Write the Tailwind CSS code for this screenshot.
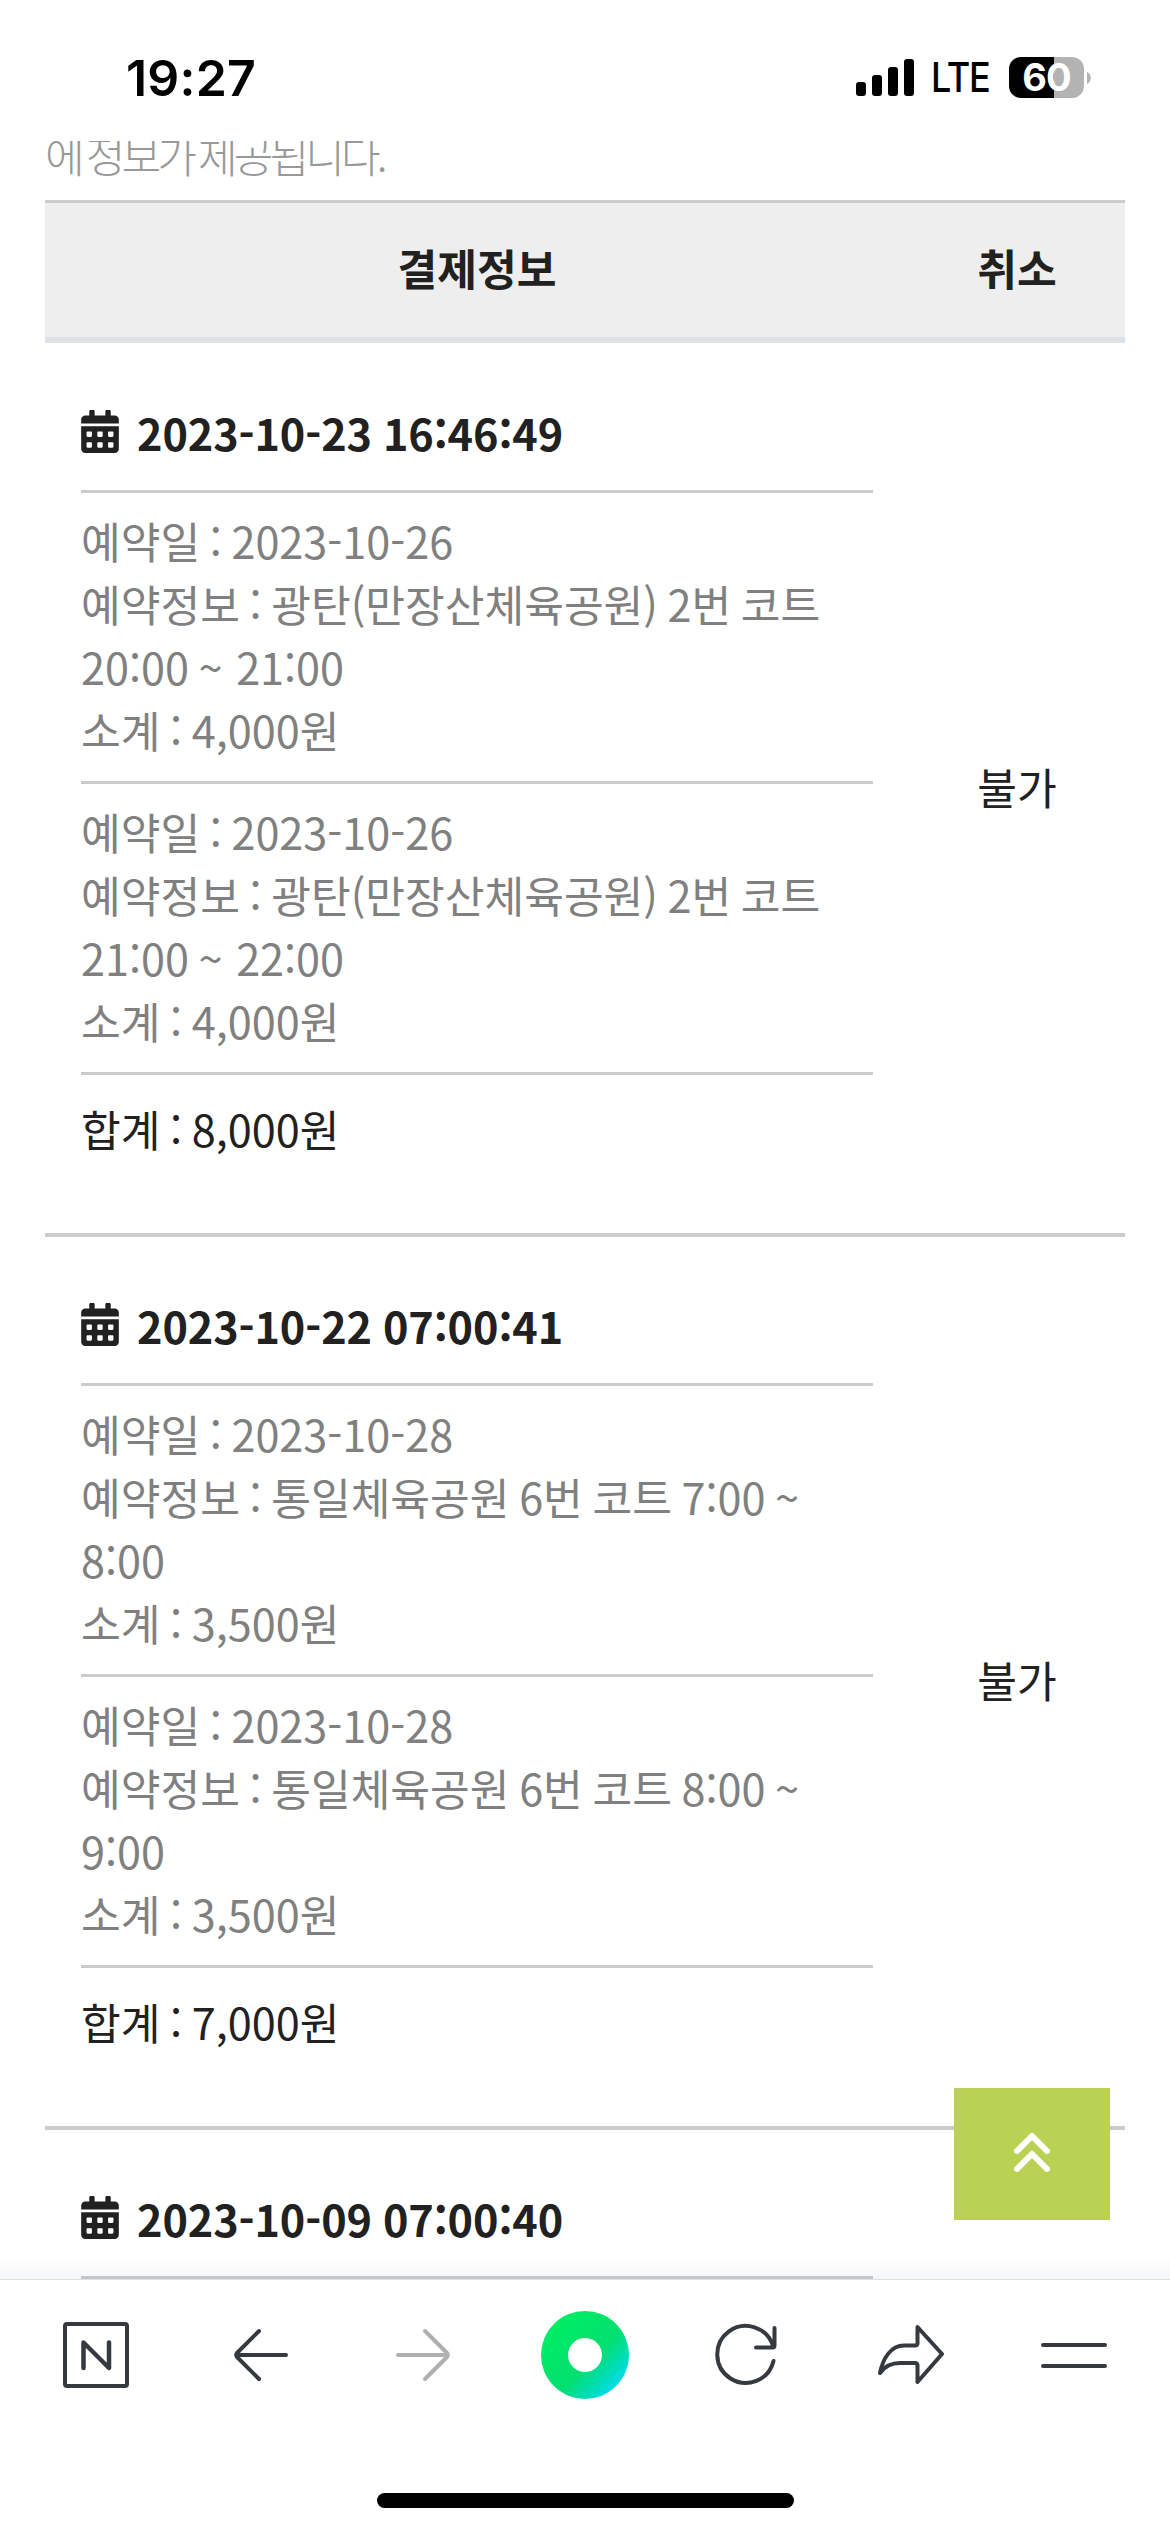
<!DOCTYPE html>
<html lang="ko">
<head>
  <meta charset="UTF-8">
  <meta name="viewport" content="width=device-width, initial-scale=1.0">
  <title>예약 내역</title>
  <script src="https://cdn.jsdelivr.net/npm/@tailwindcss/browser@4"></script>
</head>
<body class="bg-white text-[#212121] font-['Noto_Sans_CJK_KR',sans-serif] text-[43.2px] leading-[63px] [word-spacing:-2.5px]">
  <div class="relative flex flex-col w-[1170px] h-[2532px] overflow-hidden">

    <!-- status bar -->
    <header class="h-[141px] shrink-0 flex justify-between items-start pt-[57px] pl-[126px] pr-[79px] font-['Inter',sans-serif] text-black bg-white">
      <span class="text-[50px] leading-[42px] font-semibold tracking-[0.2px]">19:27</span>
      <div class="flex items-center h-[41px]">
        <svg class="w-[58px] h-[41px]" viewBox="0 0 58 41">
          <rect x="0" y="25" width="10" height="14" rx="3"/>
          <rect x="16" y="18" width="10" height="21" rx="3"/>
          <rect x="32" y="10" width="10" height="29" rx="3"/>
          <rect x="48" y="2" width="10" height="37" rx="3"/>
        </svg>
        <span class="ml-[17px] w-[63px] text-[41px] leading-[41px] tracking-[-1.5px] font-medium origin-left scale-x-[0.88]">LTE</span>
        <div class="ml-[15px] w-[75px] h-[41px] rounded-[12px] bg-[linear-gradient(to_right,#000_60%,#b3b3b3_60%)] text-white text-[38px] leading-[41px] font-bold text-center tracking-[-1px]">60</div>
        <svg class="ml-[3px] w-[4px] h-[12px]" viewBox="0 0 4 12"><path d="M0 0c5 2 5 10 0 12z" fill="#b3b3b3"/></svg>
      </div>
    </header>

    <main class="flex-1 min-h-0 overflow-hidden px-[45px]">
      <p class="-mt-[18px] mb-[14px] text-[#999] font-light tracking-[-4px] [word-spacing:-3px]">에 정보가 제공됩니다.</p>

      <div class="flex h-[143px] border-t-3 border-t-[#ccc] border-b-6 border-b-[#dee2e6] bg-[#eee] items-center text-center font-bold pb-[5px]">
        <div class="w-[864px]">결제정보</div>
        <div class="flex-1">취소</div>
      </div>
      <div id="list" class="mt-px"></div>
    </main>

    <!-- browser toolbar -->
    <nav class="relative z-10 h-[253px] shrink-0 bg-white border-t border-[#e0e1e3] flex flex-col justify-between pb-6">
      <div class="absolute -top-[21px] left-0 w-full h-5 bg-linear-to-b from-transparent to-[#3c5078]/5"></div>
      <div class="flex justify-between items-center px-[63px] h-[150px]">
        <svg class="w-[66px] h-[66px]" viewBox="0 0 66 66" fill="none" stroke="#36393f" stroke-width="4" stroke-linecap="round" stroke-linejoin="round">
          <rect x="2" y="2" width="62" height="62" rx="2"/>
          <path d="M20.500 46V20.500L46 46V20.500" stroke-width="4.500"/>
        </svg>
        <svg class="w-[66px] h-[66px]" viewBox="0 0 66 66" fill="none" stroke="#36393f" stroke-width="4" stroke-linecap="round" stroke-linejoin="round">
          <path d="M60 33H11M33 9L11 31q-1.500 2 0 4L33 57"/>
        </svg>
        <svg class="w-[66px] h-[66px]" viewBox="0 0 66 66" fill="none" stroke="#b0b0b0" stroke-width="4" stroke-linecap="round" stroke-linejoin="round">
          <path d="M9 33H58M36 9L58 31q1.500 2 0 4L36 57"/>
        </svg>
        <svg class="w-[88px] h-[88px] -mx-[11px]" viewBox="0 0 88 88">
          <defs>
            <linearGradient id="dot" x1="0.150" y1="0.150" x2="0.850" y2="0.850">
              <stop offset="0" stop-color="#00ed64"/>
              <stop offset="0.600" stop-color="#03df70"/>
              <stop offset="1" stop-color="#00dbe8"/>
            </linearGradient>
          </defs>
          <circle cx="44" cy="44" r="44" fill="url(#dot)"/>
          <circle cx="44" cy="44" r="17" fill="#fff"/>
        </svg>
        <svg class="w-[66px] h-[66px]" viewBox="0 0 66 66" fill="none" stroke="#36393f" stroke-width="4" stroke-linecap="round" stroke-linejoin="round">
          <path d="M58.500 39A28.500 28.500 0 1 1 58 24M59.500 6V23.500q0 2 -2 2H41"/>
        </svg>
        <svg class="w-[66px] h-[66px]" viewBox="0 0 66 66" fill="none" stroke="#36393f" stroke-width="4" stroke-linecap="round" stroke-linejoin="round">
          <path d="M2 51C5 36 13 23.500 26 23.500H37q2.500 0 2.500 -2.500V5L64 32L39.500 60V43.500q0 -2.500 -2.500 -2.500H22C13 41 7 44 2 51z"/>
        </svg>
        <svg class="w-[66px] h-[66px]" viewBox="0 0 66 66" fill="none" stroke="#36393f" stroke-width="4" stroke-linecap="round">
          <path d="M2 23H64M2 44H64"/>
        </svg>
      </div>
      <div class="w-[417px] h-[15px] rounded-full bg-black mx-auto"></div>
    </nav>

    <!-- back to top -->
    <button class="absolute right-[60px] bottom-[312px] w-[156px] h-[132px] pb-[3px] bg-[#bad154] flex justify-center items-center">
      <svg class="w-9 h-[39px]" viewBox="0 0 36 39" fill="none" stroke="#fff" stroke-width="6" stroke-linecap="round" stroke-linejoin="round">
        <path d="M3 18L18 3L33 18M3 36L18 21L33 36"/>
      </svg>
    </button>
  </div>

  <script>
    const payments = [
      { date: '2023-10-23 16:46:49', total: '8,000', status: '불가', items: [
        { day: '2023-10-26', info: '광탄(만장산체육공원) 2번 코트<br>20:00 ~ <span class="ml-[4px]">21:00</span>', price: '4,000' },
        { day: '2023-10-26', info: '광탄(만장산체육공원) 2번 코트<br>21:00 ~ <span class="ml-[4px]">22:00</span>', price: '4,000' }
      ] },
      { date: '2023-10-22 07:00:41', total: '7,000', status: '불가', items: [
        { day: '2023-10-28', info: '통일체육공원 6번 코트 7:00 ~<br>8:00', price: '3,500' },
        { day: '2023-10-28', info: '통일체육공원 6번 코트 8:00 ~<br>9:00', price: '3,500' }
      ] },
      { date: '2023-10-09 07:00:40', total: '', status: '', items: [] }
    ];

    const calendar = `
      <svg class="w-[38px] h-[43px] -mt-[3px]" viewBox="0 0 448 512" fill="#212121">
        <path d="M0 464c0 26.500 21.500 48 48 48h352c26.500 0 48-21.500 48-48V192H0v272zm320-196c0-6.600 5.400-12 12-12h40c6.600 0 12 5.400 12 12v40c0 6.600-5.400 12-12 12h-40c-6.600 0-12-5.400-12-12v-40zm0 128c0-6.600 5.400-12 12-12h40c6.600 0 12 5.400 12 12v40c0 6.600-5.400 12-12 12h-40c-6.600 0-12-5.400-12-12v-40zM192 268c0-6.600 5.400-12 12-12h40c6.600 0 12 5.400 12 12v40c0 6.600-5.400 12-12 12h-40c-6.600 0-12-5.400-12-12v-40zm0 128c0-6.600 5.400-12 12-12h40c6.600 0 12 5.400 12 12v40c0 6.600-5.400 12-12 12h-40c-6.600 0-12-5.400-12-12v-40zM64 268c0-6.600 5.400-12 12-12h40c6.600 0 12 5.400 12 12v40c0 6.600-5.400 12-12 12H76c-6.600 0-12-5.400-12-12v-40zm0 128c0-6.600 5.400-12 12-12h40c6.600 0 12 5.400 12 12v40c0 6.600-5.400 12-12 12H76c-6.600 0-12-5.400-12-12v-40zM400 64h-48V16c0-8.800-7.200-16-16-16h-32c-8.800 0-16 7.200-16 16v48H160V16c0-8.800-7.200-16-16-16h-32c-8.800 0-16 7.200-16 16v48H48C21.500 64 0 85.500 0 112v48h448v-48c0-26.500-21.500-48-48-48z"/>
      </svg>`;

    document.getElementById('list').innerHTML = payments.map(p => `
      <div class="flex h-[893px] border-b-4 border-[#ccc]">
        <div class="w-[864px] px-9 pt-[57px]">
          <div class="flex items-center gap-[18px] h-[89px] pb-[26px] font-bold tracking-[-0.1px] [word-spacing:-1px]">${calendar}<span>${p.date}</span></div>
          ${p.items.map(i => `
            <div class="border-t-3 border-[#ccc] pt-[16px] pb-[20px] text-[#808080] whitespace-nowrap">
              예약일 : ${i.day}<br>예약정보 : ${i.info}<br>소계 : ${i.price}원
            </div>
          `).join('')}
          <div class="border-t-3 border-[#ccc] pt-[22px]">${p.total && `합계 : ${p.total}원`}</div>
        </div>
        <div class="flex-1 flex items-center justify-center pb-[4px]">${p.status}</div>
      </div>
    `).join('');
  </script>
</body>
</html>
